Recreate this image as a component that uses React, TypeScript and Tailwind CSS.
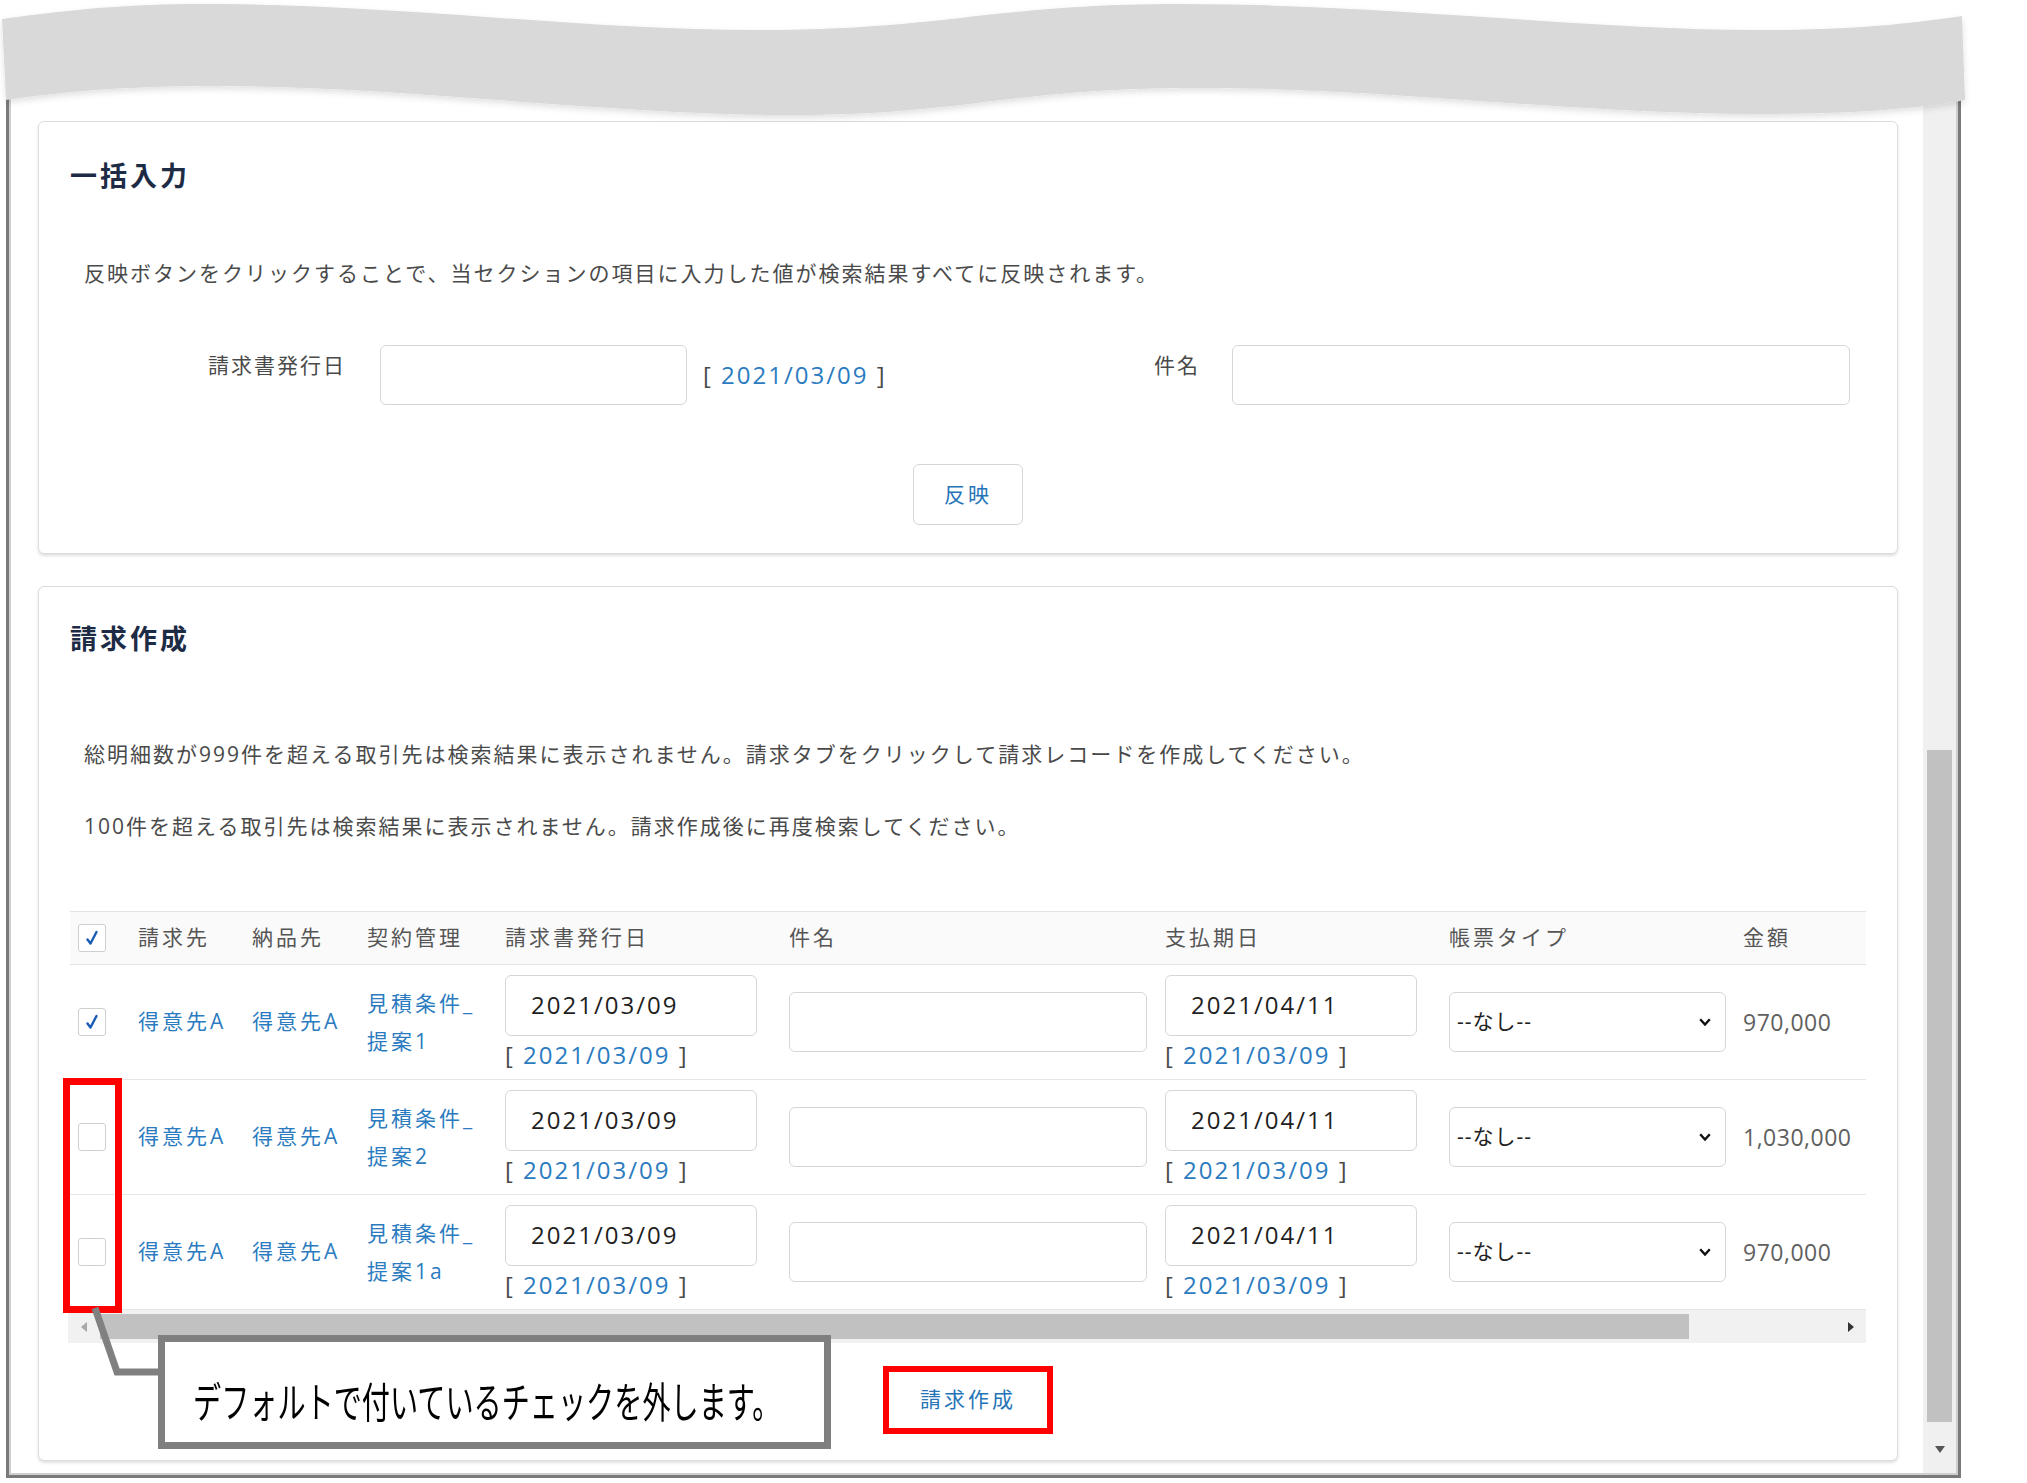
const FONT = "font-['Open_Sans','Noto_Sans_CJK_JP',sans-serif]"

const ROWS = [
  { checked: true, plan: "提案1", amount: "970,000" },
  { checked: false, plan: "提案2", amount: "1,030,000" },
  { checked: false, plan: "提案1a", amount: "970,000" },
]

function CheckBox({ checked }: { checked: boolean }) {
  return (
    <span className="flex h-[28px] w-[28px] items-center justify-center rounded-[3px] border border-[#cfcfcf] bg-white">
      {checked && (
        <svg viewBox="0 0 12 16" className="h-[16px] w-[12px]">
          <path d="M1.5 9.5 L4.5 13.5 L10.5 2" stroke="#1a5bb5" strokeWidth="2.4" fill="none" strokeLinecap="round" strokeLinejoin="round" />
        </svg>
      )}
    </span>
  )
}

function DateLink() {
  return (
    <span className="whitespace-nowrap text-[24px] leading-[28px] tracking-[2px] text-[#4a4a4a]">
      [ <span className="text-[#2b7bc0]">2021/03/09</span> ]
    </span>
  )
}

function DateField({ value }: { value: string }) {
  return (
    <div className="flex flex-col items-start">
      <div className="flex h-[61px] w-[252px] items-center rounded-[6px] border border-[#d6d6d6] bg-white pl-[25px] text-[24px] tracking-[2px] text-[#1f1f1f]">
        {value}
      </div>
      <div className="mt-[5px]">
        <DateLink />
      </div>
    </div>
  )
}

export default function App() {
  return (
    <div className={`relative h-[1483px] w-[2027px] overflow-hidden bg-white ${FONT}`}>
      <div className="pl-[6px] pt-[60px]">
        {/* window frame */}
        <div className="h-[1418px] w-[1955px] border-[3px] border-[#7a7a7a]">
          <div className="flex h-full border-2 border-[#cfcfcf]">
            {/* content */}
            <div className="flex-1 pl-[27px] pr-[25px] pt-[56px]">
              {/* 一括入力 */}
              <section className="rounded-[6px] border border-[#dcdcdc] bg-white px-[31px] pb-[28px] pt-[38px] shadow-[0_2px_3px_rgba(0,0,0,0.12)]">
                <h2 className="text-[27px] font-bold leading-[32px] tracking-[3px] text-[#1d2b45]">一括入力</h2>
                <p className="ml-[14px] mt-[67px] text-[21px] leading-[28px] tracking-[2px] text-[#4a4a4a]">
                  反映ボタンをクリックすることで、当セクションの項目に入力した値が検索結果すべてに反映されます。
                </p>
                <div className="mt-[58px] flex items-start">
                  <span className="w-[276px] text-right text-[21px] leading-[40px] tracking-[2px] text-[#4a4a4a]">請求書発行日</span>
                  <div className="ml-[34px] h-[60px] w-[307px] rounded-[6px] border border-[#d6d6d6]" />
                  <div className="ml-[16px] flex h-[60px] w-[195px] items-center">
                    <DateLink />
                  </div>
                  <span className="w-[302px] text-right text-[21px] leading-[40px] tracking-[2px] text-[#4a4a4a]">件名</span>
                  <div className="ml-[32px] h-[60px] w-[618px] rounded-[6px] border border-[#d6d6d6]" />
                </div>
                <div className="mt-[59px] flex justify-center">
                  <button className="h-[61px] w-[110px] rounded-[6px] border border-[#d6d6d6] bg-white text-[21px] tracking-[3px] text-[#2574b8]">
                    反映
                  </button>
                </div>
              </section>

              {/* 請求作成 */}
              <section className="mt-[32px] h-[875px] rounded-[6px] border border-[#dcdcdc] bg-white px-[31px] pt-[36px] shadow-[0_2px_3px_rgba(0,0,0,0.12)]">
                <h2 className="text-[27px] font-bold leading-[32px] tracking-[3px] text-[#1d2b45]">請求作成</h2>
                <p className="ml-[14px] mt-[85px] text-[21px] leading-[28px] tracking-[2px] text-[#4a4a4a]">
                  総明細数が999件を超える取引先は検索結果に表示されません。請求タブをクリックして請求レコードを作成してください。
                </p>
                <p className="ml-[14px] mt-[44px] text-[21px] leading-[28px] tracking-[2px] text-[#4a4a4a]">
                  100件を超える取引先は検索結果に表示されません。請求作成後に再度検索してください。
                </p>

                {/* table */}
                <div className="mt-[71px]">
                  <div className="grid h-[54px] grid-cols-[68px_114px_115px_138px_284px_376px_284px_294px_122px] items-center border-y border-[#e3e3e3] bg-[#fafafa] text-[21px] tracking-[3px] text-[#555]">
                    <div className="pl-[8px]">
                      <CheckBox checked />
                    </div>
                    <span>請求先</span>
                    <span>納品先</span>
                    <span>契約管理</span>
                    <span>請求書発行日</span>
                    <span>件名</span>
                    <span>支払期日</span>
                    <span>帳票タイプ</span>
                    <span>金額</span>
                  </div>
                  {ROWS.map((row, i) => (
                    <div
                      key={i}
                      className="grid h-[115px] grid-cols-[68px_114px_115px_138px_284px_376px_284px_294px_122px] items-center border-b border-[#e6e6e6]"
                    >
                      <div className="pl-[8px]">
                        <CheckBox checked={row.checked} />
                      </div>
                      <span className="text-[21px] tracking-[3px] text-[#2b7bc0]">得意先A</span>
                      <span className="text-[21px] tracking-[3px] text-[#2b7bc0]">得意先A</span>
                      <div className="text-[21px] leading-[38px] tracking-[3px] text-[#2b7bc0]">
                        <div>見積条件_</div>
                        <div>{row.plan}</div>
                      </div>
                      <DateField value="2021/03/09" />
                      <div className="h-[60px] w-[358px] rounded-[6px] border border-[#d6d6d6]" />
                      <DateField value="2021/04/11" />
                      <div className="flex h-[60px] w-[277px] items-center justify-between rounded-[6px] border border-[#d6d6d6] pl-[7px] pr-[14px] text-[21px] tracking-[1px] text-[#222]">
                        <span>--なし--</span>
                        <svg viewBox="0 0 12 8" className="h-[8px] w-[12px]">
                          <path d="M1.2 1.2 L6 6.5 L10.8 1.2" stroke="#111" strokeWidth="2.4" fill="none" />
                        </svg>
                      </div>
                      <span className="text-[23px] tracking-[0.5px] text-[#606060]">{row.amount}</span>
                    </div>
                  ))}
                  {/* horizontal scrollbar */}
                  <div className="-ml-[2px] flex h-[33px] items-center bg-[#f1f1f1]">
                    <div className="flex w-[32px] justify-center">
                      <svg viewBox="0 0 6 10" className="h-[10px] w-[6px]">
                        <path d="M6 0 L0 5 L6 10 Z" fill="#a8a8a8" />
                      </svg>
                    </div>
                    <div className="h-[25px] w-[1589px] bg-[#c1c1c1]" />
                    <div className="flex flex-1 justify-end pr-[12px]">
                      <svg viewBox="0 0 6 10" className="h-[10px] w-[6px]">
                        <path d="M0 0 L6 5 L0 10 Z" fill="#333" />
                      </svg>
                    </div>
                  </div>
                </div>

                <div className="mt-[23px] flex justify-center">
                  <div className="flex h-[68px] w-[170px] items-center justify-center border-[6px] border-[#ff0000] bg-white text-[21px] tracking-[3px] text-[#2574b8]">
                    請求作成
                  </div>
                </div>
              </section>
            </div>

            {/* vertical scrollbar */}
            <div className="flex w-[33px] flex-col items-center bg-[#f0f0f0]">
              <div className="mt-[685px] h-[672px] w-[25px] bg-[#c1c1c1]" />
              <svg viewBox="0 0 10 7" className="mt-[24px] h-[7px] w-[10px]">
                <path d="M0 0 L10 0 L5 7 Z" fill="#555" />
              </svg>
            </div>
          </div>
        </div>
      </div>

      {/* torn top edge */}
      <svg className="absolute left-0 top-0" width="1975" height="130" viewBox="0 0 1975 130">
        <defs>
          <filter id="wv" x="-5%" y="-20%" width="110%" height="150%">
            <feDropShadow dx="0" dy="3" stdDeviation="3" floodColor="#000" floodOpacity="0.12" />
          </filter>
        </defs>
        <path
          filter="url(#wv)"
          fill="#d9d9d9"
          d="M2,19 C80,8 140,3 220,4 C420,6 600,32 780,30 C950,28 1000,4 1180,4 C1400,4 1600,32 1780,30 C1870,29 1920,22 1962,16 L1965,100 C1920,108 1860,114 1760,114 C1560,114 1380,86 1180,88 C1000,90 960,116 780,115 C600,114 400,86 220,86 C120,86 60,92 6,100 Z"
        />
      </svg>

      {/* annotations */}
      <div className="absolute left-[63px] top-[1078px] h-[235px] w-[59px] border-[7px] border-[#ff0000]" />
      <svg className="absolute left-0 top-[1300px]" width="200" height="90" viewBox="0 1300 200 90">
        <polyline points="95,1308 117,1372 165,1372" fill="none" stroke="#808080" strokeWidth="7" />
      </svg>
      <div className="absolute left-[158px] top-[1335px] flex h-[114px] w-[673px] items-center border-[7px] border-[#7f7f7f] bg-white pl-[28px] pt-[20px]">
        <span className="inline-block origin-left scale-x-[0.67] whitespace-nowrap text-[42px] leading-[48px] text-black">
          デフォルトで付いているチェックを外します。
        </span>
      </div>
    </div>
  )
}
